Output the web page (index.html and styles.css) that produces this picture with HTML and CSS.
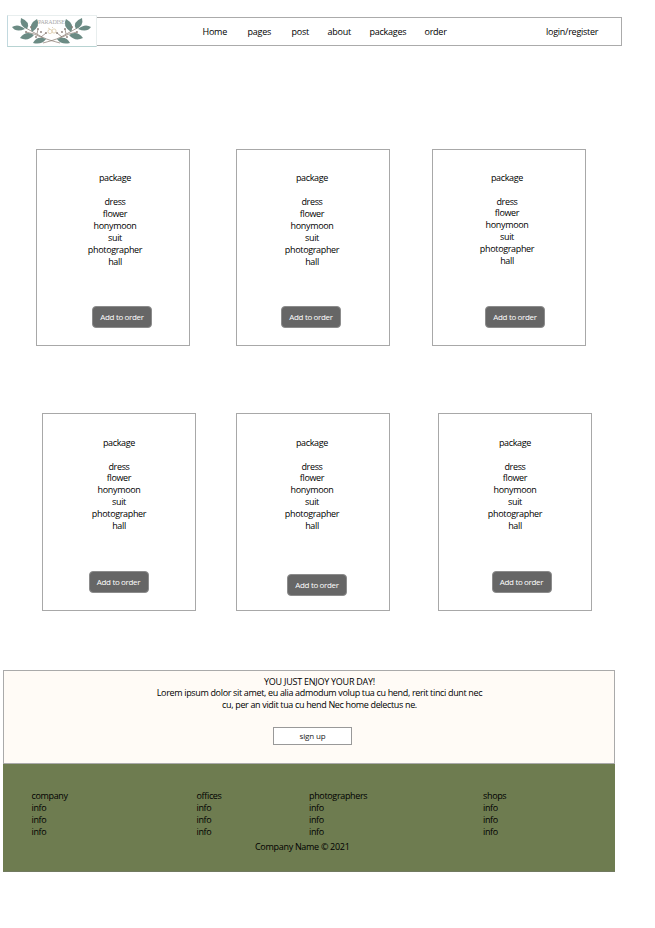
FILE: index.html
```html
<!DOCTYPE html>
<html lang="en">
<head>
<meta charset="utf-8">
<title>Paradise</title>
<link rel="stylesheet" href="styles.css">
</head>
<body>
<header class="topbar">
  <svg class="logo" viewBox="0 0 88 30">
    <defs>
      <g id="sprig">
        <g fill="none" stroke="#85776d" stroke-width=".7">
          <path d="M16 11C22 14 28 18 34 21S45 25 52 27"/>
          <path d="M18 16L26 18L35 22M24 15L23 11M29 18L30 13M33 21L38 17"/>
        </g>
        <g fill="#6b8b84">
          <path d="M4 11Q10 7 17 13Q8 17 4 11Z"/>
          <path d="M13 2Q23 6 19 13Q11 10 13 2Z"/>
          <path d="M29 3Q33 10 24 16Q20 8 29 3Z"/>
          <path d="M12 22Q18 14 26 19Q20 26 12 22Z"/>
          <path d="M25 27Q29 19 38 23Q34 29 25 27Z"/>
        </g>
        <g fill="#8a7d76"><circle cx="23" cy="11" r=".9"/><circle cx="30" cy="13" r=".9"/><circle cx="33" cy="16" r=".9"/><circle cx="38" cy="17" r=".9"/><circle cx="18" cy="16" r=".9"/><circle cx="28" cy="21" r=".9"/></g>
      </g>
    </defs>
    <use href="#sprig"/>
    <use href="#sprig" transform="matrix(-1 0 0 1 87 0)"/>
    <g fill="none" stroke="#dccaa8" stroke-width=".8"><circle cx="42" cy="15.5" r="2.1"/><circle cx="46" cy="15" r="2.1"/><path d="M40 12l2 1M44 11l1 1"/></g>
    <text class="logo-name" x="30" y="8" textLength="27">PARADISE</text>
  </svg>
  <nav class="menu">
    <a>Home</a><a>pages</a><a>post</a><a>about</a><a>packages</a><a>order</a><a>login/register</a>
  </nav>
</header>

<main>
  <section class="row row-one">
    <article class="card c1"><h2>package</h2><ul><li>dress</li><li>flower</li><li>honymoon</li><li>suit</li><li>photographer</li><li>hall</li></ul><button>Add to order</button></article>
    <article class="card c2"><h2>package</h2><ul><li>dress</li><li>flower</li><li>honymoon</li><li>suit</li><li>photographer</li><li>hall</li></ul><button>Add to order</button></article>
    <article class="card c3 tight"><h2>package</h2><ul><li>dress</li><li>flower</li><li>honymoon</li><li>suit</li><li>photographer</li><li>hall</li></ul><button>Add to order</button></article>
  </section>
  <section class="row row-two">
    <article class="card c4 tight"><h2>package</h2><ul><li>dress</li><li>flower</li><li>honymoon</li><li>suit</li><li>photographer</li><li>hall</li></ul><button>Add to order</button></article>
    <article class="card c5 tight"><h2>package</h2><ul><li>dress</li><li>flower</li><li>honymoon</li><li>suit</li><li>photographer</li><li>hall</li></ul><button>Add to order</button></article>
    <article class="card c6 tight"><h2>package</h2><ul><li>dress</li><li>flower</li><li>honymoon</li><li>suit</li><li>photographer</li><li>hall</li></ul><button>Add to order</button></article>
  </section>
</main>

<section class="signup">
  <p class="headline">YOU JUST ENJOY YOUR DAY!</p>
  <p class="blurb">Lorem ipsum dolor sit amet, eu alia admodum volup tua cu hend, rerit tinci dunt nec<br>cu, per an vidit tua cu hend Nec home delectus ne.</p>
  <button>sign up</button>
</section>
<footer>
  <div class="columns">
    <ul><li>company</li><li>info</li><li>info</li><li>info</li></ul>
    <ul><li>offices</li><li>info</li><li>info</li><li>info</li></ul>
    <ul><li>photographers</li><li>info</li><li>info</li><li>info</li></ul>
    <ul><li>shops</li><li>info</li><li>info</li><li>info</li></ul>
  </div>
  <p class="copyright">Company Name © 2021</p>
</footer>
</body>
</html>
```
FILE: styles.css
```css
* { box-sizing: border-box; margin: 0; padding: 0; }
body {
  width: 655px; height: 928px; overflow: hidden;
  padding-top: 15px;
  background: #fff; color: #000;
  font: 9px/12px "Open Sans", "Noto Sans", sans-serif;
  letter-spacing: -0.34px;
}
ul { list-style: none; }
h2, button { font: inherit; letter-spacing: inherit; }
button { display: block; }

.topbar { display: flex; width: 615px; height: 32px; margin-left: 7px; }
.logo { width: 90px; height: 32px; border: 1px solid #e8eeee; border-left-color: #c2d9df; border-bottom-color: #b7d3d2; background: #fff; }
.logo-name { font: 6px "Liberation Serif", serif; letter-spacing: 0; fill: #aaa; }
.menu {
  display: grid; grid-template-columns: 45px 44px 36px 42px 55px 121.5px 1fr;
  flex: 1; height: 29px; margin-top: 2px; padding: 8px 0 0 105.5px;
  border: 1px solid #ababab; border-left: 0;
  letter-spacing: -0.25px; white-space: nowrap;
}

.row { display: flex; width: 655px; }
.row-one { padding-left: 36px; margin-top: 102px; }
.row-two { padding-left: 42px; margin-top: 67px; }
.card {
  display: flex; flex-direction: column; align-items: center;
  width: 154px; height: 197px; padding-top: 22px;
  border: 1px solid #a8a8a8; text-align: center;
}
.row-two .card { height: 198px; padding-top: 23px; }
.card h2, .card ul { transform: translateX(var(--shift)); }
.card ul { margin-top: 12px; }
.tight li:first-child { margin-bottom: -1px; }
.card button {
  width: 60px; height: 22px; margin-top: auto; margin-bottom: 17px; margin-left: var(--button);
  border: 1px solid #8c8c8c; border-radius: 4px;
  background: #666; color: #fff; font-size: 8px; letter-spacing: -0.34px; white-space: nowrap;
}
.c1 { --shift: 2px; --button: 18px; }
.c2 { --shift: -1px; --button: -4px; margin-left: 46px; }
.c3 { --shift: -2px; --button: 12px; margin-left: 42px; }
.c4 { --shift: 0px; --button: -1px; }
.c5 { --shift: -1px; --button: 8px; margin-left: 40px; }
.c6 { --shift: 0px; --button: 13px; margin-left: 48px; }
.row-two .c5 button { margin-bottom: 14px; }

.signup {
  width: 612px; height: 94px; margin: 59px 0 0 3px; padding: 5px 0 0 21px;
  border: 1px solid #aaa; background: #fffbf6; text-align: center;
}
.headline { line-height: 11px; letter-spacing: -0.25px; }
.signup button {
  width: 79px; height: 18px; margin: 16px 0 0 248px;
  border: 1px solid #999; background: #fff; color: #222; font-size: 8px; letter-spacing: -0.15px;
}
footer {
  width: 612px; height: 108px; margin-left: 3px; padding: 26px 0 0 28.5px;
  background: #6e7c50; border-bottom: 1px solid #717a60;
}
.columns { display: grid; grid-template-columns: 165px 112.5px 174px 1fr; }
.copyright { margin: 3px 0 0 223.5px; letter-spacing: -0.3px; }
```
